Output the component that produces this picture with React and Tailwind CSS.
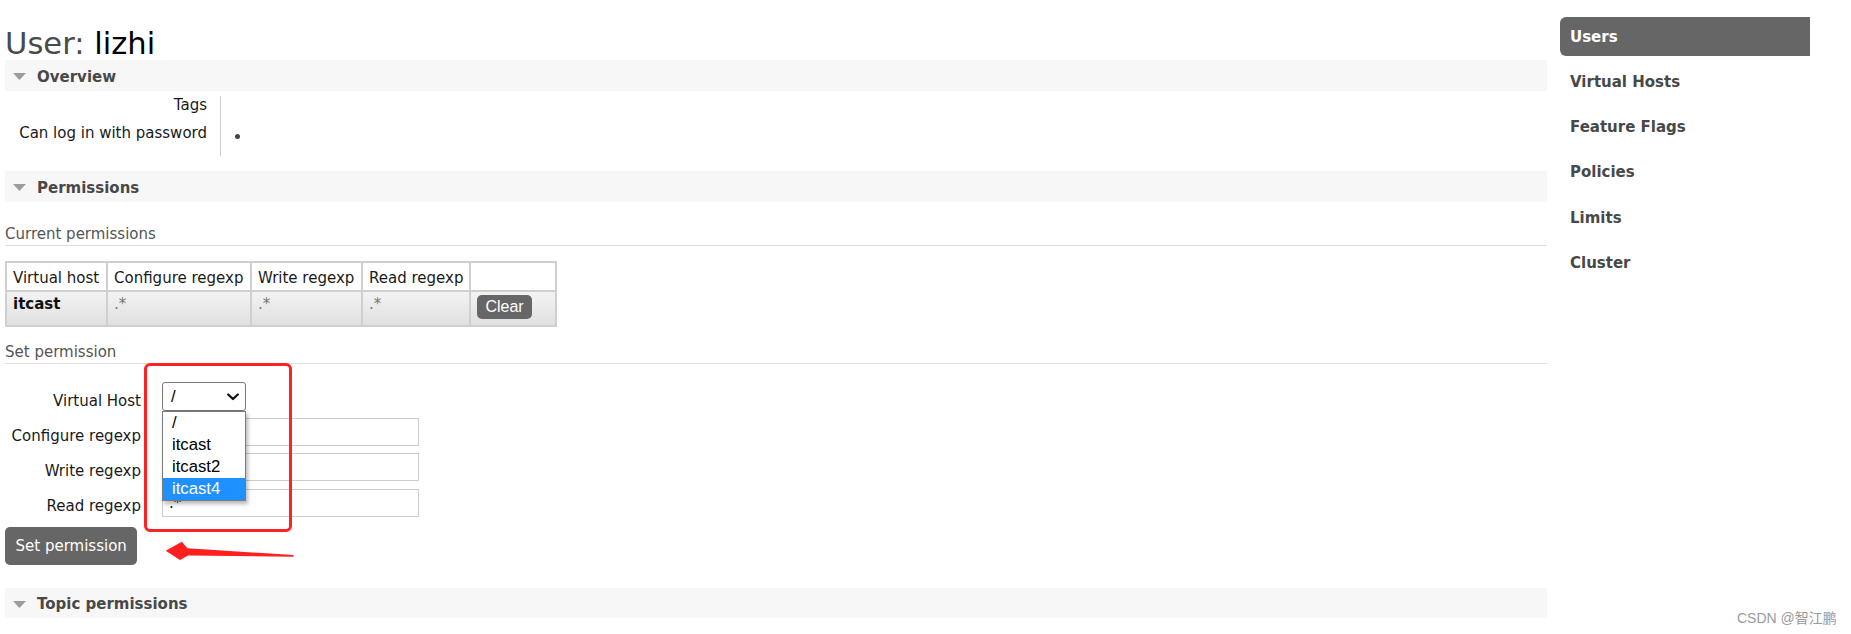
const FONT = "font-['DejaVu_Sans','Verdana',sans-serif]";

function Bar({ label, className }) {
  return (
    <div className={`flex items-center bg-[#f7f7f7] pt-[2px] ${className}`}>
      <svg className="ml-[8px] mr-[11px]" width="13" height="7" viewBox="0 0 13 7">
        <polygon points="0,0 13,0 6.5,7" fill="#9c9c9c" />
      </svg>
      <span className="text-[15px] font-bold text-[#484848] leading-[18px]">{label}</span>
    </div>
  );
}

function Chevron() {
  return (
    <svg width="12" height="8" viewBox="0 0 12 8">
      <polyline points="1.2,1.5 6,6 10.8,1.5" fill="none" stroke="#111" strokeWidth="2.2" strokeLinecap="round" strokeLinejoin="round" />
    </svg>
  );
}

const navItems = ["Users", "Virtual Hosts", "Feature Flags", "Policies", "Limits", "Cluster"];

export default function App() {
  const th = "border-r-2 border-b-2 border-t-2 border-[#cfcfcf] bg-white font-normal text-left pl-[6px] pt-[6px] pb-[3px] align-top";
  const td = "border-r-2 border-b-2 border-[#cfcfcf] bg-linear-to-b from-[#f3f3f3] to-[#e0e0e0] pl-[6px] pt-[3px] pb-[6px] align-top";
  return (
    <div className={`relative w-[1851px] h-[634px] overflow-hidden bg-white text-[#1a1a1a] ${FONT}`}>
      <div className="flex">
        <main className="ml-[5px] w-[1542px] shrink-0">
          <h1 className="mt-[28px] h-[32px] text-[30.6px] leading-[32px] font-normal">
            <span className="text-[#4a4a4a]">User: </span>
            <span className="text-black">lizhi</span>
          </h1>

          <Bar label="Overview" className="h-[31px]" />

          <div className="mt-[5px] flex text-[15px] leading-[18px]">
            <div className="w-[216px] border-r border-[#cccccc] text-right pr-[13px]">
              <div className="h-[28px]">Tags</div>
              <div className="h-[32px]">Can log in with password</div>
            </div>
            <div>
              <div className="h-[28px]" />
              <div className="h-[32px] pl-[14px] pt-[10px]">
                <div className="w-[5px] h-[5px] rounded-full bg-[#444]" />
              </div>
            </div>
          </div>

          <Bar label="Permissions" className="mt-[15px] h-[31px]" />

          <div className="mt-[23px] pb-[2px] border-b border-[#dddddd] text-[15px] leading-[18px] text-[#555]">
            Current permissions
          </div>

          <table className="mt-[15px] table-fixed border-separate border-spacing-0 w-[552px] text-[15px] leading-[18px]">
            <thead>
              <tr>
                <th className={`${th} border-l-2 w-[103px]`}>Virtual host</th>
                <th className={`${th} w-[144px]`}>Configure regexp</th>
                <th className={`${th} w-[111px]`}>Write regexp</th>
                <th className={`${th} w-[108px]`}>Read regexp</th>
                <th className={`${th} w-[86px]`}></th>
              </tr>
            </thead>
            <tbody>
              <tr>
                <td className={`${td} border-l-2 font-bold text-[#111]`}>itcast</td>
                <td className={`${td} text-[#777]`}>.*</td>
                <td className={`${td} text-[#777]`}>.*</td>
                <td className={`${td} text-[#777]`}>.*</td>
                <td className={td}>
                  <button className="h-[24px] w-[55px] rounded-[5px] bg-[#666] text-white text-[16px] leading-[24px] font-['Liberation_Sans',Arial,sans-serif] text-center">
                    Clear
                  </button>
                </td>
              </tr>
            </tbody>
          </table>

          <div className="mt-[16px] pb-[2px] border-b border-[#dddddd] text-[15px] leading-[18px] text-[#555]">
            Set permission
          </div>

          <div className="mt-[18px] text-[15px] leading-[18px]">
            <div className="flex items-start h-[36px]">
              <div className="w-[136px] text-right pt-[9.5px]">Virtual Host</div>
              <div className="relative ml-[21px] w-[84px] h-[29px] border border-[#767676] rounded-[3px] bg-white flex items-center justify-between pl-[8px] pr-[6px] font-['Liberation_Sans',Arial,sans-serif] text-[16.7px] text-black">
                <span>/</span>
                <Chevron />
                <div className="absolute z-10 left-[-1px] top-[28px] w-[84px] border border-[#7a7a7a] bg-white shadow-[2px_3px_4px_rgba(0,0,0,0.28)] font-['Liberation_Sans',Arial,sans-serif] text-[16.7px] leading-[22px]">
                  <div className="h-[22px] pl-[9px] text-black">/</div>
                  <div className="h-[22px] pl-[9px] text-black">itcast</div>
                  <div className="h-[22px] pl-[9px] text-black">itcast2</div>
                  <div className="h-[22px] pl-[9px] bg-[#1e90ff] text-white">itcast4</div>
                </div>
              </div>
            </div>
            <div className="flex items-start h-[35px]">
              <div className="w-[136px] text-right pt-[8.5px]">Configure regexp</div>
              <input readOnly value=".*" className="ml-[21px] w-[257px] h-[28px] border border-[#cccccc] pl-[6px] text-[15px] bg-white outline-none" />
            </div>
            <div className="flex items-start h-[36px]">
              <div className="w-[136px] text-right pt-[8.5px]">Write regexp</div>
              <input readOnly value=".*" className="ml-[21px] w-[257px] h-[28px] border border-[#cccccc] pl-[6px] text-[15px] bg-white outline-none" />
            </div>
            <div className="flex items-start h-[28px]">
              <div className="w-[136px] text-right pt-[7.5px]">Read regexp</div>
              <input readOnly value=".*" className="ml-[21px] w-[257px] h-[28px] border border-[#cccccc] pl-[6px] text-[15px] bg-white outline-none" />
            </div>
          </div>

          <button className="mt-[10px] h-[38px] px-[10.5px] rounded-[5px] bg-[#666] text-white text-[15px] leading-[18px] inline-flex items-center">
            Set permission
          </button>

          <Bar label="Topic permissions" className="mt-[23px] h-[30px]" />
        </main>

        <nav className="ml-[13px] mt-[17px] w-[250px] shrink-0 flex flex-col gap-[6.2px]">
          {navItems.map((n, i) => (
            <div
              key={n}
              className={
                i === 0
                  ? "h-[39px] flex items-center pl-[10px] pt-[1px] text-[15px] font-bold bg-[#666] text-white rounded-l-[6px]"
                  : "h-[39px] flex items-center pl-[10px] pt-[1px] text-[15px] font-bold text-[#484848]"
              }
            >
              {n}
            </div>
          ))}
        </nav>
      </div>

      <div className="pointer-events-none absolute z-20 left-[144px] top-[363px] w-[148px] h-[169px] border-[3px] border-[#ff2222] rounded-[6px]" />

      <svg className="pointer-events-none absolute z-20 left-[160px] top-[536px]" width="140" height="30" viewBox="0 0 140 30">
        <polygon points="5.7,14.7 21.8,5.7 27.5,12.3 133.5,19 133.5,20.7 28,19.5 20,24" fill="#ff1f1f" />
      </svg>

      <div className="absolute left-[1737px] top-[609px] text-[14px] leading-[18px] text-[#9a9a9a] font-['Liberation_Sans','Noto_Sans_CJK_SC',sans-serif]">
        CSDN @智江鹏
      </div>
    </div>
  );
}
